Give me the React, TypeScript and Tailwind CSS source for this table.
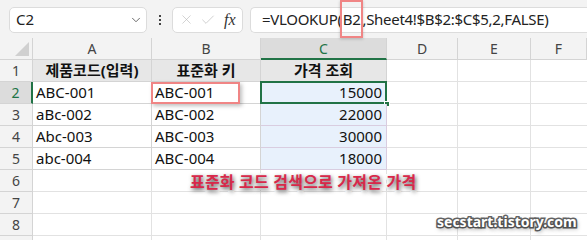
import { ChevronDown, X, Check } from "lucide-react";

const COLS = [
  { id: "A", w: "w-[119px]" },
  { id: "B", w: "w-[109px]" },
  { id: "C", w: "w-[126px]" },
  { id: "D", w: "w-[71px]" },
  { id: "E", w: "w-[73px]" },
  { id: "F", w: "flex-1" },
];

const ROWS: [string, string, string][] = [
  ["ABC-001", "ABC-001", "15000"],
  ["aBc-002", "ABC-002", "22000"],
  ["Abc-003", "ABC-003", "30000"],
  ["abc-004", "ABC-004", "18000"],
];

const FONT = "font-['Noto_Sans','Noto_Sans_CJK_KR',sans-serif]";

function FormulaBar() {
  return (
    <div className="flex h-[38px] items-center bg-[#f3f3f3] pl-[9px] pt-[1px]">
      <div className="flex h-[26px] w-[138px] items-center justify-between rounded-[5px] border border-[#dcdcdc] bg-white pl-[6px] pr-[3px] text-[15px] text-[#222]">
        <span>C2</span>
        <ChevronDown size={14} strokeWidth={1.5} className="text-[#555]" />
      </div>
      <div className="flex w-[25px] flex-col items-center gap-[2px]">
        <span className="h-[2px] w-[2px] bg-[#444]" />
        <span className="h-[2px] w-[2px] bg-[#444]" />
        <span className="h-[2px] w-[2px] bg-[#444]" />
      </div>
      <div className="flex h-[26px] w-[71px] items-center rounded-[5px] border border-[#dcdcdc] bg-white pl-[6px]">
        <X size={15} strokeWidth={1} className="text-[#b8b8b8]" />
        <Check size={16} strokeWidth={1} className="ml-[6px] text-[#b8b8b8]" />
        <span className="ml-[8px] font-['Liberation_Serif',serif] text-[16px] italic text-[#333]">fx</span>
      </div>
      <div className="ml-[7px] flex h-[26px] flex-1 items-center rounded-l-[5px] border border-r-0 border-[#dcdcdc] bg-white pl-[11px] text-[15px] tracking-[-0.3px] text-[#222]">
        <span>=VLOOKUP(</span>
        <span className="relative mx-[1px]">
          B2
          <span className="absolute -left-[3px] -right-[3px] -top-[8px] -bottom-[7px] border-2 border-[#f08585] shadow-[0_1px_3px_rgba(0,0,0,0.2)]" />
        </span>
        <span className="ml-[1px]">,Sheet4!$B$2:$C$5,2,FALSE)</span>
      </div>
    </div>
  );
}

function HeaderRow() {
  return (
    <div className="flex h-[22px] bg-[#f3f3f3] text-[14px] text-[#444]">
      <div className="relative w-[33px] border-r border-b border-[#d4d4d4]">
        <div className="absolute bottom-[3px] right-[3px] h-0 w-0 border-b-[14px] border-l-[14px] border-b-[#d0d0d0] border-l-transparent" />
      </div>
      {COLS.map((c) => (
        <div
          key={c.id}
          className={`${c.w} flex items-center justify-center border-r ${
            c.id === "C"
              ? "border-b-2 border-r-[#d4d4d4] border-b-[#217346] bg-[#dcdcdc] text-[#217346]"
              : "border-b border-[#d4d4d4]"
          }`}
        >
          {c.id}
        </div>
      ))}
    </div>
  );
}

function RowHead({ n }: { n?: number }) {
  const active = n === 2;
  return (
    <div
      className={`flex w-[33px] items-center justify-center text-[14px] ${
        active
          ? "border-r-2 border-b border-r-[#217346] border-b-[#d4d4d4] bg-[#dcdcdc] text-[#217346]"
          : "border-r border-b border-[#d4d4d4] bg-[#f3f3f3] text-[#444]"
      }`}
    >
      {n}
    </div>
  );
}

export default function App() {
  return (
    <div className={`relative h-[240px] w-[587px] overflow-hidden bg-white ${FONT}`}>
      <FormulaBar />
      <HeaderRow />

      {/* row 1 - table header */}
      <div className="flex h-[22px]">
        <RowHead n={1} />
        {["제품코드(입력)", "표준화 키", "가격 조회"].map((t, i) => (
          <div
            key={t}
            className={`${COLS[i].w} flex items-center justify-center border-r border-b border-[#d4d4d4] bg-[#e7e7e7] text-[15px] font-bold text-[#111]`}
          >
            {t}
          </div>
        ))}
        <div className="w-[71px] border-r border-b border-[#e2e2e2]" />
        <div className="w-[73px] border-r border-b border-[#e2e2e2]" />
        <div className="flex-1 border-b border-[#e2e2e2]" />
      </div>

      {ROWS.map((r, i) => (
        <div key={i} className="flex h-[22px]">
          <RowHead n={i + 2} />
          <div className="flex w-[119px] items-center border-r border-b border-[#d4d4d4] pl-[3px] text-[15px] text-[#111]">
            {r[0]}
          </div>
          <div className="relative flex w-[109px] items-center border-r border-b border-[#d4d4d4] pl-[3px] text-[15px] text-[#111]">
            {r[1]}
            {i === 0 && (
              <div className="absolute -left-[1px] right-[20px] top-[0px] -bottom-[1px] border-2 border-[#f08585] shadow-[2px_2px_4px_rgba(0,0,0,0.25)]" />
            )}
          </div>
          <div className="relative flex w-[126px] items-center justify-end border-r border-b border-[#d9cde0] bg-[#e8f1fc] pr-[4px] text-[15px] text-[#111]">
            {r[2]}
            {i === 0 && (
              <>
                <div className="absolute -left-[1px] -right-[1px] -top-[1px] -bottom-[1px] border-2 border-[#217346]" />
                <div className="absolute -bottom-[4px] -right-[4px] h-[6px] w-[6px] border border-white bg-[#217346]" />
              </>
            )}
          </div>
          <div className="w-[71px] border-r border-b border-[#e2e2e2]" />
          <div className="w-[73px] border-r border-b border-[#e2e2e2]" />
          <div className="flex-1 border-b border-[#e2e2e2]" />
        </div>
      ))}

      {[6, 7, 8, undefined].map((n, k) => (
        <div key={k} className="flex h-[22px]">
          <RowHead n={n} />
          <div className="w-[119px] border-r border-b border-[#e2e2e2]" />
          <div className="w-[109px] border-r border-b border-[#e2e2e2]" />
          <div className="w-[126px] border-r border-b border-[#e2e2e2]" />
          <div className="w-[71px] border-r border-b border-[#e2e2e2]" />
          <div className="w-[73px] border-r border-b border-[#e2e2e2]" />
          <div className="flex-1 border-b border-[#e2e2e2]" />
        </div>
      ))}

      {/* annotation overlays */}
      <div className="absolute left-[190px] top-[170px] text-[16px] font-bold tracking-[0.2px] text-[#d8284a] [-webkit-text-stroke:4px_white] [paint-order:stroke_fill] [text-shadow:1px_2px_4px_rgba(0,0,0,0.7)]">
        표준화 코드 검색으로 가져온 가격
      </div>
      <div className="absolute left-[437px] top-[211px] text-[14px] font-bold text-white [-webkit-text-stroke:3px_#666] [paint-order:stroke_fill] [text-shadow:1px_2px_4px_rgba(0,0,0,0.5)]">
        secstart.tistory.com
      </div>
    </div>
  );
}
